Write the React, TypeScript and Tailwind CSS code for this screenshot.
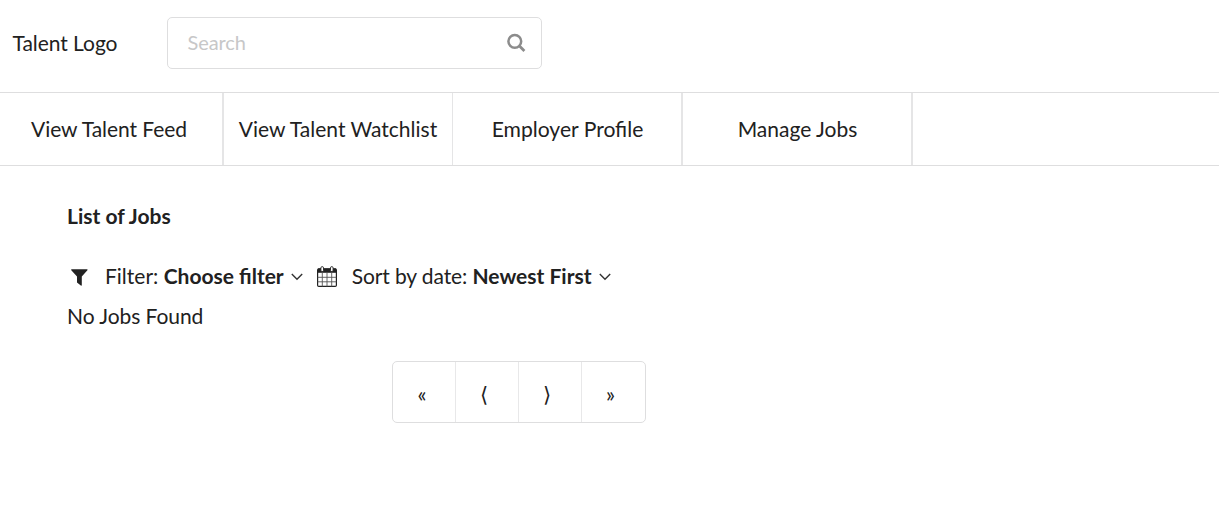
const Caret = () => (
  <svg width="12" height="8" viewBox="0 0 12 8" className="ml-[7px] mt-px" fill="none" stroke="#333" strokeWidth="1.4"><path d="M.8 1.1 6 6.3 11.2 1.1" /></svg>
);
const Search = () => (
  <svg width="19" height="20" viewBox="0 0 19 20" className="-mt-px" fill="none" stroke="#8c8c8c">
    <circle cx="7.8" cy="8.300" r="6.400" strokeWidth="2.500" />
    <path d="m12.500 13 4.900 4.900" strokeWidth="2.800" />
  </svg>
);
const Funnel = () => (
  <svg width="17" height="17" viewBox="0 0 17 17" fill="#222" className="mt-[2px] mr-[17px] ml-[4px]">
    <path d="M.6.2h15.5q.8.3.3 1l-5.600 6.300v8.600q-.2.9-1 .3L6 13.600V7.500L.3 1.200Q-.2.500.6.200Z" />
  </svg>
);
const Calendar = () => (
  <svg width="20" height="21" viewBox="0 0 20 21" fill="none" stroke="#222">
    <rect x=".6" y="2.800" width="18.800" height="17.600" rx="1.200" strokeWidth="1.200" />
    <path d="M1 2.500h18v4.300H1z" fill="#222" stroke="none" />
    <path d="M.7 11.300h18.600M.7 15.800h18.600M5.300 6.500v14M10 6.500v14M14.700 6.500v14" stroke="#555" strokeWidth=".9" />
    <rect x="3.900" y=".6" width="2.600" height="5" rx="1.300" fill="#fff" strokeWidth=".9" />
    <rect x="13.500" y=".6" width="2.600" height="5" rx="1.300" fill="#fff" strokeWidth=".9" />
  </svg>
);

export default function App() {
  return (
    <div className="h-[510px] w-[1219px] overflow-hidden bg-white font-['Lato',sans-serif] text-[21px] leading-[30px] text-[#212121]">
      <header className="flex h-[92px] pt-[17px]">
        <div className="w-[167px] pt-[11px] pl-[12.500px] tracking-[-0.05px]">Talent Logo</div>
        <div className="flex h-[52px] w-[375px] items-center justify-between rounded-[5px] border border-[#dededf] pr-[15px] pl-[19.500px]">
          <span className="pb-[2px] text-[20px] tracking-[-0.1px] text-[#c7c7c8]">Search</span>
          <Search />
        </div>
      </header>
      <nav className="flex h-[74px] border-y border-[#dededf] text-center leading-[72px]">
        <div className="w-[224px] border-r-2 border-[#e5e5e6] pr-1 tracking-[-0.06px]">View Talent Feed</div>
        <div className="w-[229px] border-r border-[#e5e5e6]">View Talent Watchlist</div>
        <div className="w-[230px] border-r-2 border-[#e5e5e6] pl-px text-[21.100px]">Employer Profile</div>
        <div className="w-[230px] border-r-2 border-[#e5e5e6] pl-px">Manage Jobs</div>
      </nav>
      <main className="pt-[35px] pl-[67px]">
        <h1 className="font-bold">List of Jobs</h1>
        <div className="mt-[30px] flex h-[30px] items-center whitespace-pre">
          <Funnel />
          <span>Filter: </span><b>Choose filter</b><Caret />
          <span className="mr-[15px] ml-[14px]"><Calendar /></span>
          <span className="tracking-[-0.1px]">Sort by date: </span><b>Newest First</b><Caret />
        </div>
        <p className="mt-[10px] tracking-[-0.06px]">No Jobs Found</p>
        <div className="mt-[30px] ml-[325px] flex h-[62px] w-[254px] rounded-[5px] border border-[#dededf] text-center leading-[64px]">
          <span className="w-[63px] border-r border-[#e8e8e9] pr-1">«</span>
          <span className="w-[63px] border-r border-[#e8e8e9] pr-1.5">⟨</span>
          <span className="w-[63px] border-r border-[#e8e8e9] pr-1.5">⟩</span>
          <span className="w-[63px] pr-1.5">»</span>
        </div>
      </main>
    </div>
  );
}
